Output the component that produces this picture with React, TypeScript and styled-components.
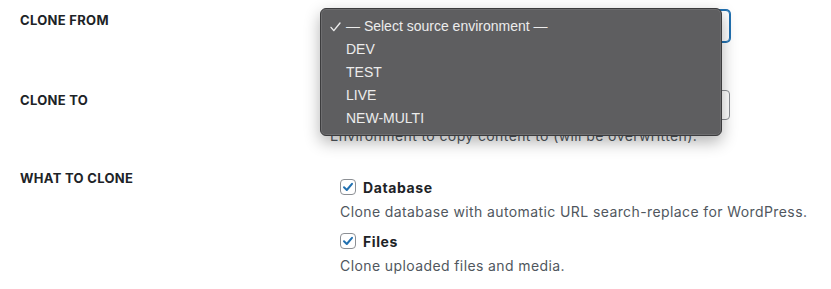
import React from "react";
import styled, { createGlobalStyle } from "styled-components";

const GlobalStyle = createGlobalStyle`
  body {
    margin: 0;
    background: #fff;
    font-family: "Inter", "Liberation Sans", sans-serif;
    color: #1d2327;
  }
`;

const options = ["DEV", "TEST", "LIVE", "NEW-MULTI"];

const CheckIcon = () => (
  <svg width="12" height="12" viewBox="0 0 12 12">
    <path d="M2 6.3 L4.8 9 L10 2.8" fill="none" stroke="#2271b1" strokeWidth="2" strokeLinecap="round" strokeLinejoin="round" />
  </svg>
);

const MenuTick = () => (
  <svg width="11" height="10" viewBox="0 0 11 10">
    <path d="M1 5.4 L3.8 8.6 L10 1" fill="none" stroke="#ececec" strokeWidth="1.4" strokeLinecap="round" strokeLinejoin="round" />
  </svg>
);

const App = () => {
  return (
    <Page>
      <GlobalStyle />
      <Form>
        <Row height={80}>
          <Label>Clone from</Label>
          <Field>
            <Select focused />
          </Field>
        </Row>
        <Row height={78}>
          <Label>Clone to</Label>
          <Field>
            <Select />
            <Hint>Environment to copy content to (will be overwritten).</Hint>
          </Field>
        </Row>
        <Row>
          <Label>What to clone</Label>
          <Field>
            <Choices>
              <Choice>
                <Box>
                  <CheckIcon />
                </Box>
                <ChoiceName>Database</ChoiceName>
              </Choice>
              <ChoiceHint>Clone database with automatic URL search-replace for WordPress.</ChoiceHint>
              <Choice>
                <Box>
                  <CheckIcon />
                </Box>
                <ChoiceName>Files</ChoiceName>
              </Choice>
              <ChoiceHint>Clone uploaded files and media.</ChoiceHint>
            </Choices>
          </Field>
        </Row>
      </Form>
      <Menu>
        <MenuItem>
          <Tick>
            <MenuTick />
          </Tick>
          — Select source environment —
        </MenuItem>
        {options.map((o) => (
          <MenuItem key={o}>{o}</MenuItem>
        ))}
      </Menu>
    </Page>
  );
};

export default App;

const Page = styled.div`
  position: relative;
  width: 831px;
  height: 289px;
  overflow: hidden;
`;

const Form = styled.div`
  display: flex;
  flex-direction: column;
  padding-top: 10px;
`;

const Row = styled.div<{ height?: number }>`
  display: grid;
  grid-template-columns: 330px 400px;
  height: ${({ height }) => (height ? `${height}px` : "auto")};
`;

const Label = styled.div`
  padding: 0 0 0 20px;
  font-size: 13px;
  font-weight: 700;
  line-height: 20px;
  text-transform: uppercase;
  letter-spacing: 0.3px;
  color: #1d2327;
`;

const Field = styled.div`
  display: flex;
  flex-direction: column;
`;

const Select = styled.div<{ focused?: boolean }>`
  box-sizing: border-box;
  height: ${({ focused }) => (focused ? "32px" : "30px")};
  border: 1px solid ${({ focused }) => (focused ? "#2271b1" : "#8c8f94")};
  box-shadow: ${({ focused }) => (focused ? "0 0 0 1px #2271b1" : "none")};
  border-radius: 4px;
  background: #fff;
`;

const Hint = styled.div`
  margin-top: 6px;
  font-size: 14px;
  line-height: 20px;
  letter-spacing: 0.4px;
  color: #50575e;
  white-space: nowrap;
`;

const Choices = styled.div`
  display: flex;
  flex-direction: column;
  padding: 10px 0 0 10px;
`;

const Choice = styled.div`
  display: flex;
  align-items: center;
  gap: 7px;
  height: 18px;
`;

const Box = styled.div`
  box-sizing: border-box;
  width: 16px;
  height: 16px;
  border: 1px solid #8c8f94;
  border-radius: 4px;
  display: flex;
  align-items: center;
  justify-content: center;
`;

const ChoiceName = styled.span`
  font-size: 14px;
  font-weight: 700;
  letter-spacing: 0.6px;
  color: #1d2327;
`;

const ChoiceHint = styled.div`
  margin: 6px 0 10px;
  font-size: 14px;
  line-height: 20px;
  letter-spacing: 0.4px;
  color: #50575e;
  white-space: nowrap;
`;

const Menu = styled.div`
  position: absolute;
  left: 320px;
  top: 8px;
  width: 402px;
  box-sizing: border-box;
  padding: 6px 0 5px;
  background: #5e5e60;
  border: 1px solid #3c3c3e;
  border-radius: 6px;
  box-shadow: inset 0 0 0 1px rgba(255, 255, 255, 0.1), 0 6px 16px rgba(0, 0, 0, 0.3);
  font-family: "Liberation Sans", "Inter", sans-serif;
`;

const MenuItem = styled.div`
  position: relative;
  height: 23px;
  line-height: 23px;
  padding-left: 25px;
  font-size: 14px;
  color: #ececec;
`;

const Tick = styled.span`
  position: absolute;
  left: 9px;
  top: 7px;
  display: flex;
`;
